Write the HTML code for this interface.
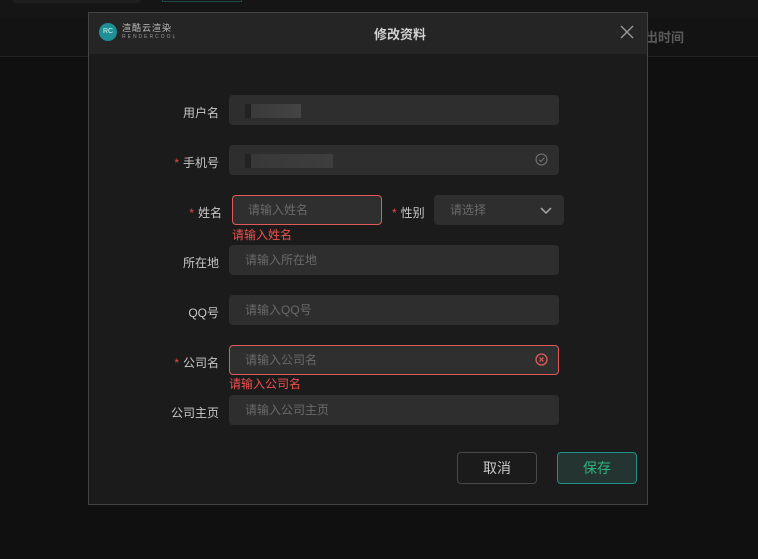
<!DOCTYPE html>
<html><head><meta charset="utf-8"><style>
*{margin:0;padding:0;box-sizing:border-box}
body{width:758px;height:559px;background:#101010;font-family:"Liberation Sans","Noto Sans CJK SC",sans-serif;position:relative;overflow:hidden;font-size:12px}
.a{position:absolute}
.inp{position:absolute;background:#2e2e2e;border-radius:4px;height:30px;color:#6a6a6a;font-size:12px;line-height:30px;padding-left:16px}
.lbl{position:absolute;color:#c8c8c8;font-size:12px;text-align:right;width:120px;left:99px}
.st{color:#e24c4c;margin-right:4px}
.err{border:1px solid #e05a5a;background:#2f2f2f}
.msg{position:absolute;color:#f0504f;font-size:12px}
</style></head><body>
<div class="a" style="left:0;top:0;width:758px;height:18px;background:#151515"></div>
<div class="a" style="left:12px;top:0;width:129px;height:3px;background:#1e1e1e;border-radius:0 0 4px 4px"></div>
<div class="a" style="left:162px;top:0;width:80px;height:2px;border:1px solid #1f4a4a;border-top:none"></div>
<div class="a" style="left:0;top:18px;width:758px;height:39px;background:#131313;border-bottom:1px solid #222"></div>
<div class="a" style="left:645px;top:27px;color:#5a5a5a;font-size:13px;font-weight:bold">出时间</div>

<div class="a" style="left:88px;top:12px;width:560px;height:493px;background:#1b1b1b;border:1px solid #444">
 <div class="a" style="left:0;top:0;width:558px;height:41px;background:#252525"></div>
 <div class="a" style="left:10px;top:10px;width:18px;height:18px;border-radius:50%;background:#1f8f95;color:#cfe;font-size:7px;line-height:18px;text-align:center">RC</div>
 <div class="a" style="left:33px;top:10px;color:#bbb;font-size:9px;letter-spacing:1px;line-height:10px">渲酷云渲染</div>
 <div class="a" style="left:33px;top:21px;color:#999;font-size:5px;letter-spacing:2px">RENDERCOOL</div>
 <div class="a" style="left:285px;top:11px;color:#d0d0d0;font-size:13px;font-weight:bold">修改资料</div>
 <svg class="a" style="left:531px;top:12px" width="14" height="14"><path d="M1 1L13 13M13 1L1 13" stroke="#999" stroke-width="1.4"/></svg>
</div>

<div class="lbl" style="top:104px">用户名</div>
<div class="inp" style="left:229px;top:95px;width:330px"><span style="display:inline-block;width:56px;height:14px;vertical-align:middle;background:linear-gradient(90deg,#222 0 6px,#3a3a3a 6px,#444)"></span></div>

<div class="lbl" style="top:154px"><span class="st">*</span>手机号</div>
<div class="inp" style="left:229px;top:145px;width:330px"><span style="display:inline-block;width:88px;height:14px;vertical-align:middle;background:linear-gradient(90deg,#222 0 6px,#383838 6px,#3e3e3e)"></span>
<svg class="a" style="left:306px;top:8px" width="13" height="13"><circle cx="6.5" cy="6.5" r="5.5" fill="none" stroke="#777" stroke-width="1"/><path d="M4 6.7L6 8.5L9.3 4.8" fill="none" stroke="#777"/></svg></div>

<div class="lbl" style="top:204px;left:102px"><span class="st">*</span>姓名</div>
<div class="inp err" style="left:232px;top:195px;width:150px;line-height:28px;padding-left:15px">请输入姓名</div>
<div class="msg" style="left:232px;top:226px">请输入姓名</div>
<div class="a" style="left:392px;top:204px;color:#c8c8c8"><span class="st">*</span>性别</div>
<div class="inp" style="left:434px;top:195px;width:130px">请选择
<svg class="a" style="left:106px;top:12px" width="12" height="8"><path d="M1 1L6 6L11 1" fill="none" stroke="#aaa" stroke-width="1.5"/></svg></div>

<div class="lbl" style="top:254px">所在地</div>
<div class="inp" style="left:229px;top:245px;width:330px">请输入所在地</div>

<div class="lbl" style="top:304px">QQ号</div>
<div class="inp" style="left:229px;top:295px;width:330px">请输入QQ号</div>

<div class="lbl" style="top:354px"><span class="st">*</span>公司名</div>
<div class="inp err" style="left:229px;top:345px;width:330px;line-height:28px;padding-left:15px">请输入公司名
<svg class="a" style="left:305px;top:7px" width="13" height="13"><circle cx="6.5" cy="6.5" r="5.5" fill="none" stroke="#e05a5a" stroke-width="1.3"/><path d="M4.6 4.6L8.4 8.4M8.4 4.6L4.6 8.4" stroke="#e05a5a" stroke-width="1.2"/></svg></div>
<div class="msg" style="left:229px;top:375px">请输入公司名</div>

<div class="lbl" style="top:404px">公司主页</div>
<div class="inp" style="left:229px;top:395px;width:330px">请输入公司主页</div>

<div class="a" style="left:457px;top:452px;width:80px;height:32px;border:1px solid #4a4a4a;border-radius:4px;color:#c8c8c8;font-size:14px;line-height:30px;text-align:center">取消</div>
<div class="a" style="left:557px;top:452px;width:80px;height:32px;border:1px solid #1f8f88;background:#243430;border-radius:4px;color:#2fb37f;font-size:14px;line-height:30px;text-align:center">保存</div>
</body></html>
